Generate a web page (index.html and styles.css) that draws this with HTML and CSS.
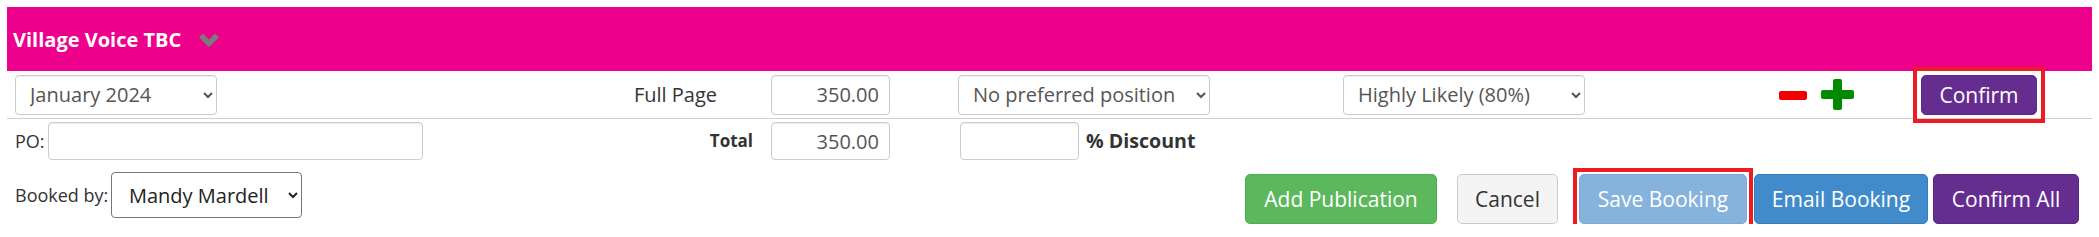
FILE: index.html
```html
<!DOCTYPE html>
<html>
<head>
<meta charset="utf-8">
<link rel="stylesheet" href="styles.css">
</head>
<body>
<div class="panel">
  <div class="panel-head">
    <span class="title">Village Voice TBC</span>
    <svg class="chev" width="22" height="15" viewBox="0 0 22 15"><polyline points="3,3.5 11,11.5 19,3.5" fill="none" stroke="#7a7a7a" stroke-width="5.5"/></svg>
  </div>
  <div class="row row-line">
    <select class="fc sel-month"><option>January 2024</option></select>
    <div class="lbl-size">Full Page</div>
    <input class="fc num" value="350.00">
    <select class="fc sel-pos"><option>No preferred position</option></select>
    <select class="fc sel-like"><option>Highly Likely (80%)</option></select>
    <span class="icon minus"><svg width="28" height="10" viewBox="0 0 28 10"><rect x="0" y="0" width="28" height="9" rx="2" fill="#f20000"/></svg></span>
    <span class="icon plus"><svg width="33" height="31" viewBox="0 0 33 31"><rect x="0" y="11" width="33" height="9" rx="2" fill="#008a00"/><rect x="12" y="0" width="9" height="31" rx="2" fill="#008a00"/></svg></span>
    <span class="hl-box wide confirm-wrap"><button class="btn purple confirm">Confirm</button></span>
  </div>
  <div class="row row-total">
    <label class="lbl-po">PO:</label>
    <input class="fc po-input">
    <span class="lbl-total">Total</span>
    <input class="fc num" value="350.00">
    <input class="fc disc">
    <span class="lbl-disc">% Discount</span>
  </div>
  <div class="row row-foot">
    <label class="lbl-booked">Booked by:</label>
    <select class="native"><option>Mandy Mardell</option></select>
    <div class="actions">
      <button class="btn green b-add">Add Publication</button>
      <button class="btn light b-cancel">Cancel</button>
      <span class="hl-box save-wrap"><button class="btn blue disabled b-save">Save Booking</button></span>
      <button class="btn blue b-email">Email Booking</button>
      <button class="btn purple b-all">Confirm All</button>
    </div>
  </div>
</div>
</body>
</html>
```
FILE: styles.css
```css
html, body { background: #fff; }
body {
  margin: 7px;
  font-family: "Open Sans", "Liberation Sans", sans-serif;
  color: #333;
  font-size: 20px;
}
.panel { width: 2085px; }
.panel-head {
  height: 64px;
  background: #ec008c;
  display: flex;
  align-items: center;
  padding-left: 6px;
}
.title {
  color: #fff;
  font-weight: 700;
  font-size: 20px;
}
.chev { margin-left: 17px; margin-top: 1px; display: block; }

.row { display: flex; align-items: center; padding-left: 8px; }
.row-line { height: 47px; border-bottom: 1px solid #cfcfcf; }
.row-total { height: 44px; align-items: flex-start; padding-top: 3px; box-sizing: border-box; }
.row-foot { align-items: flex-start; padding-top: 9px; padding-right: 13px; }

.fc {
  box-sizing: border-box;
  font-family: inherit;
  font-size: 20px;
  color: #555;
  background: #fff;
  border: 1px solid #ccc;
  border-radius: 4px;
  box-shadow: inset 0 1px 1px rgba(0,0,0,.075);
  height: 40px;
  margin: 0;
}
select.fc { padding: 0 8px 0 10px; }
input.fc { padding: 0 10px; }
.sel-month { width: 202px; }
.lbl-size { width: 554px; box-sizing: border-box; text-align: right; padding-right: 54px; }
.num { width: 119px; text-align: right; }
.sel-pos { width: 252px; margin-left: 68px; }
.sel-like { width: 242px; margin-left: 133px; }
.icon { display: flex; }
.minus { margin-left: 194px; margin-top: 2px; }
.plus { margin-left: 14px; }

.row-total .fc { height: 38px; }
.lbl-po { width: 33px; font-size: 18px; line-height: 38px; }
.po-input { width: 375px; }
.lbl-total { width: 348px; box-sizing: border-box; text-align: right; padding-right: 18px; font-weight: 700; font-size: 17px; line-height: 38px; }
.disc { width: 119px; margin-left: 70px; }
.lbl-disc { margin-left: 7px; font-weight: 700; font-size: 19.6px; line-height: 38px; }

.lbl-booked { width: 96px; font-size: 18px; line-height: 46px; }
.native {
  box-sizing: border-box;
  width: 191px;
  height: 46px;
  font-family: inherit;
  font-size: 20px;
  color: #222;
  border: 1px solid #767676;
  border-radius: 4px;
  background: #fff;
  padding: 0 8px 0 13px;
  margin: 0;
}

.actions { margin-left: auto; display: flex; align-items: flex-start; padding-top: 2px; }
.btn {
  box-sizing: border-box;
  font-family: inherit;
  font-size: 21px;
  height: 50px;
  border-radius: 5px;
  border: 1px solid transparent;
  color: #fff;
  padding: 0;
  text-align: center;
  margin: 0;
  display: block;
}
.green { background: #5cb85c; border-color: #4cae4c; }
.light { background: #f4f4f4; border-color: #ccc; color: #333; }
.blue { background: #428bca; border-color: #357ebd; }
.blue.disabled { background: #85b3dc; border-color: #7aaad6; }
.purple { background: #662d91; border-color: #5c2883; }

.hl-box { display: flex; border: 4px solid #ed1c24; padding: 2px; }
.hl-box.wide { padding: 4px; }
.confirm-wrap { margin-left: 59px; }
.confirm { width: 116px; height: 40px; }
.b-add { width: 192px; }
.b-cancel { width: 101px; margin-left: 20px; }
.save-wrap { margin: -6px 0 -6px 15px; }
.b-save { width: 168px; }
.b-email { width: 174px; margin-left: 1px; }
.b-all { width: 146px; margin-left: 5px; }
```
